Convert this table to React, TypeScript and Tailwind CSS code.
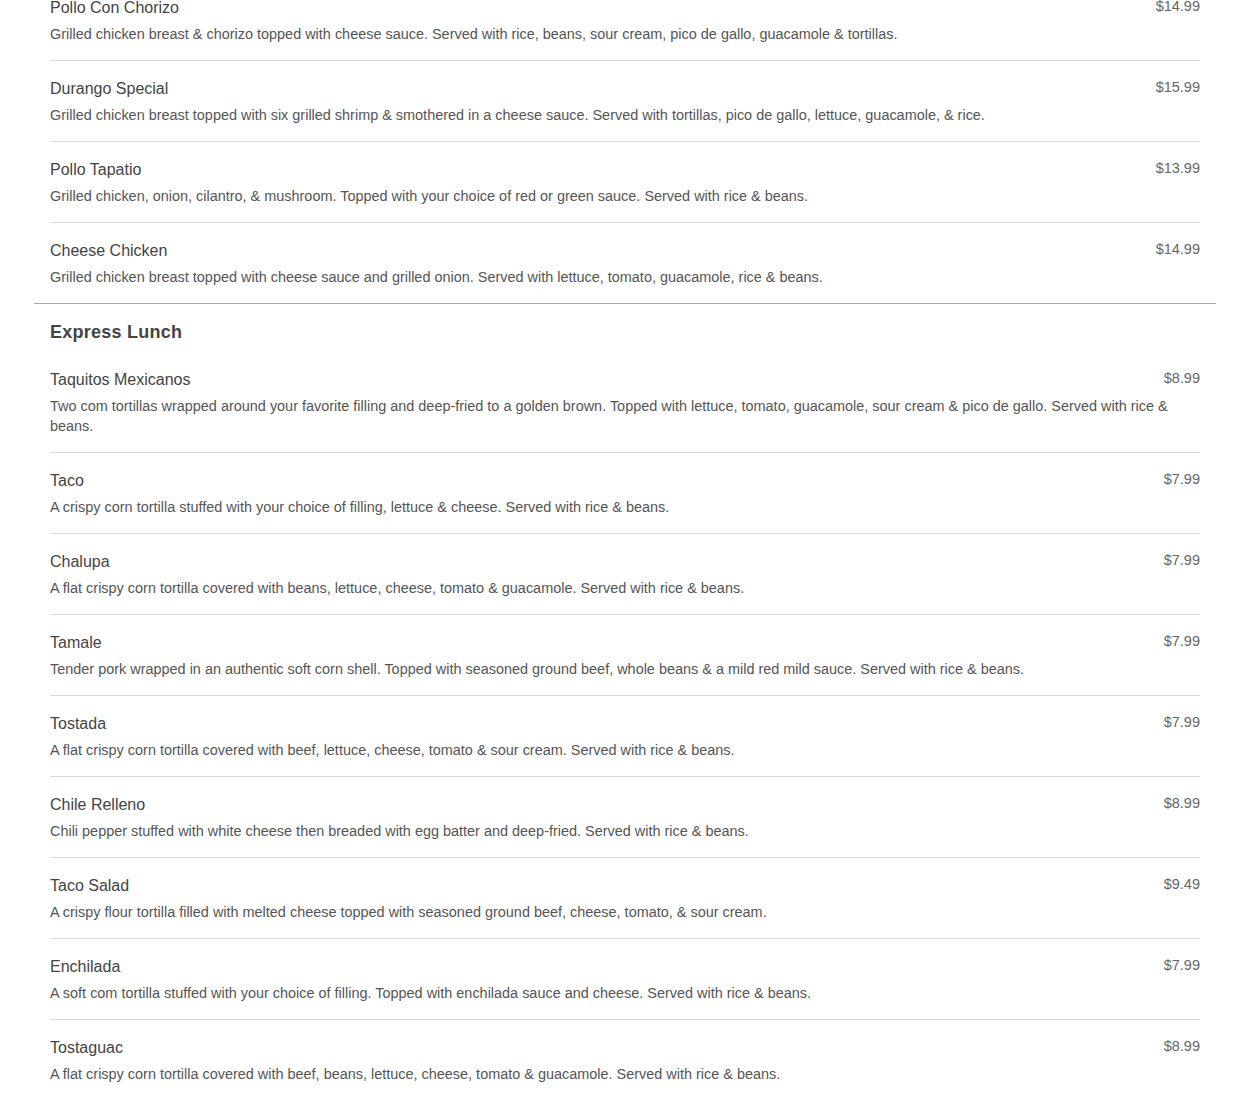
import React from 'react';

interface MenuItem {
  name: string;
  price: string;
  description: string;
}

interface Section {
  title?: string;
  items: MenuItem[];
}

const sections: Section[] = [
  {
    items: [
      {
        name: 'Pollo Con Chorizo',
        price: '$14.99',
        description:
          'Grilled chicken breast & chorizo topped with cheese sauce. Served with rice, beans, sour cream, pico de gallo, guacamole & tortillas.',
      },
      {
        name: 'Durango Special',
        price: '$15.99',
        description:
          'Grilled chicken breast topped with six grilled shrimp & smothered in a cheese sauce. Served with tortillas, pico de gallo, lettuce, guacamole, & rice.',
      },
      {
        name: 'Pollo Tapatio',
        price: '$13.99',
        description:
          'Grilled chicken, onion, cilantro, & mushroom. Topped with your choice of red or green sauce. Served with rice & beans.',
      },
      {
        name: 'Cheese Chicken',
        price: '$14.99',
        description:
          'Grilled chicken breast topped with cheese sauce and grilled onion. Served with lettuce, tomato, guacamole, rice & beans.',
      },
    ],
  },
  {
    title: 'Express Lunch',
    items: [
      {
        name: 'Taquitos Mexicanos',
        price: '$8.99',
        description:
          'Two com tortillas wrapped around your favorite filling and deep-fried to a golden brown. Topped with lettuce, tomato, guacamole, sour cream & pico de gallo. Served with rice & beans.',
      },
      {
        name: 'Taco',
        price: '$7.99',
        description: 'A crispy corn tortilla stuffed with your choice of filling, lettuce & cheese. Served with rice & beans.',
      },
      {
        name: 'Chalupa',
        price: '$7.99',
        description:
          'A flat crispy corn tortilla covered with beans, lettuce, cheese, tomato & guacamole. Served with rice & beans.',
      },
      {
        name: 'Tamale',
        price: '$7.99',
        description:
          'Tender pork wrapped in an authentic soft corn shell. Topped with seasoned ground beef, whole beans & a mild red mild sauce. Served with rice & beans.',
      },
      {
        name: 'Tostada',
        price: '$7.99',
        description:
          'A flat crispy corn tortilla covered with beef, lettuce, cheese, tomato & sour cream. Served with rice & beans.',
      },
      {
        name: 'Chile Relleno',
        price: '$8.99',
        description:
          'Chili pepper stuffed with white cheese then breaded with egg batter and deep-fried. Served with rice & beans.',
      },
      {
        name: 'Taco Salad',
        price: '$9.49',
        description:
          'A crispy flour tortilla filled with melted cheese topped with seasoned ground beef, cheese, tomato, & sour cream.',
      },
      {
        name: 'Enchilada',
        price: '$7.99',
        description:
          'A soft com tortilla stuffed with your choice of filling. Topped with enchilada sauce and cheese. Served with rice & beans.',
      },
      {
        name: 'Tostaguac',
        price: '$8.99',
        description:
          'A flat crispy corn tortilla covered with beef, beans, lettuce, cheese, tomato & guacamole. Served with rice & beans.',
      },
    ],
  },
];

function Item({ item, last }: { item: MenuItem; last: boolean }) {
  return (
    <div className={`pt-4 pb-4 ${last ? '' : 'border-b border-[#dcdcdc]'}`}>
      <div className="flex justify-between items-start gap-6">
        <h3 className="text-base leading-6 text-[#444]">{item.name}</h3>
        <span className="text-[14.5px] leading-5 text-[#666] shrink-0">{item.price}</span>
      </div>
      <p className="mt-1 text-[14.45px] leading-5 text-[#555] pr-4">{item.description}</p>
    </div>
  );
}

export default function App() {
  return (
    <div className="bg-white min-h-screen overflow-hidden" style={{ fontFamily: '"Liberation Sans", Arial, sans-serif' }}>
      <div className="mx-[34px] -mt-[20px]">
        {sections.map((section, si) => (
          <div key={si} className="border-b border-[#a8a8a8] px-4">
            {section.title && (
              <h2 className="pt-[14px] mb-[6px] text-lg leading-7 font-bold text-[#444] tracking-[0.25px]">
                {section.title}
              </h2>
            )}
            {section.items.map((item, i) => (
              <Item key={item.name} item={item} last={i === section.items.length - 1} />
            ))}
          </div>
        ))}
      </div>
    </div>
  );
}
